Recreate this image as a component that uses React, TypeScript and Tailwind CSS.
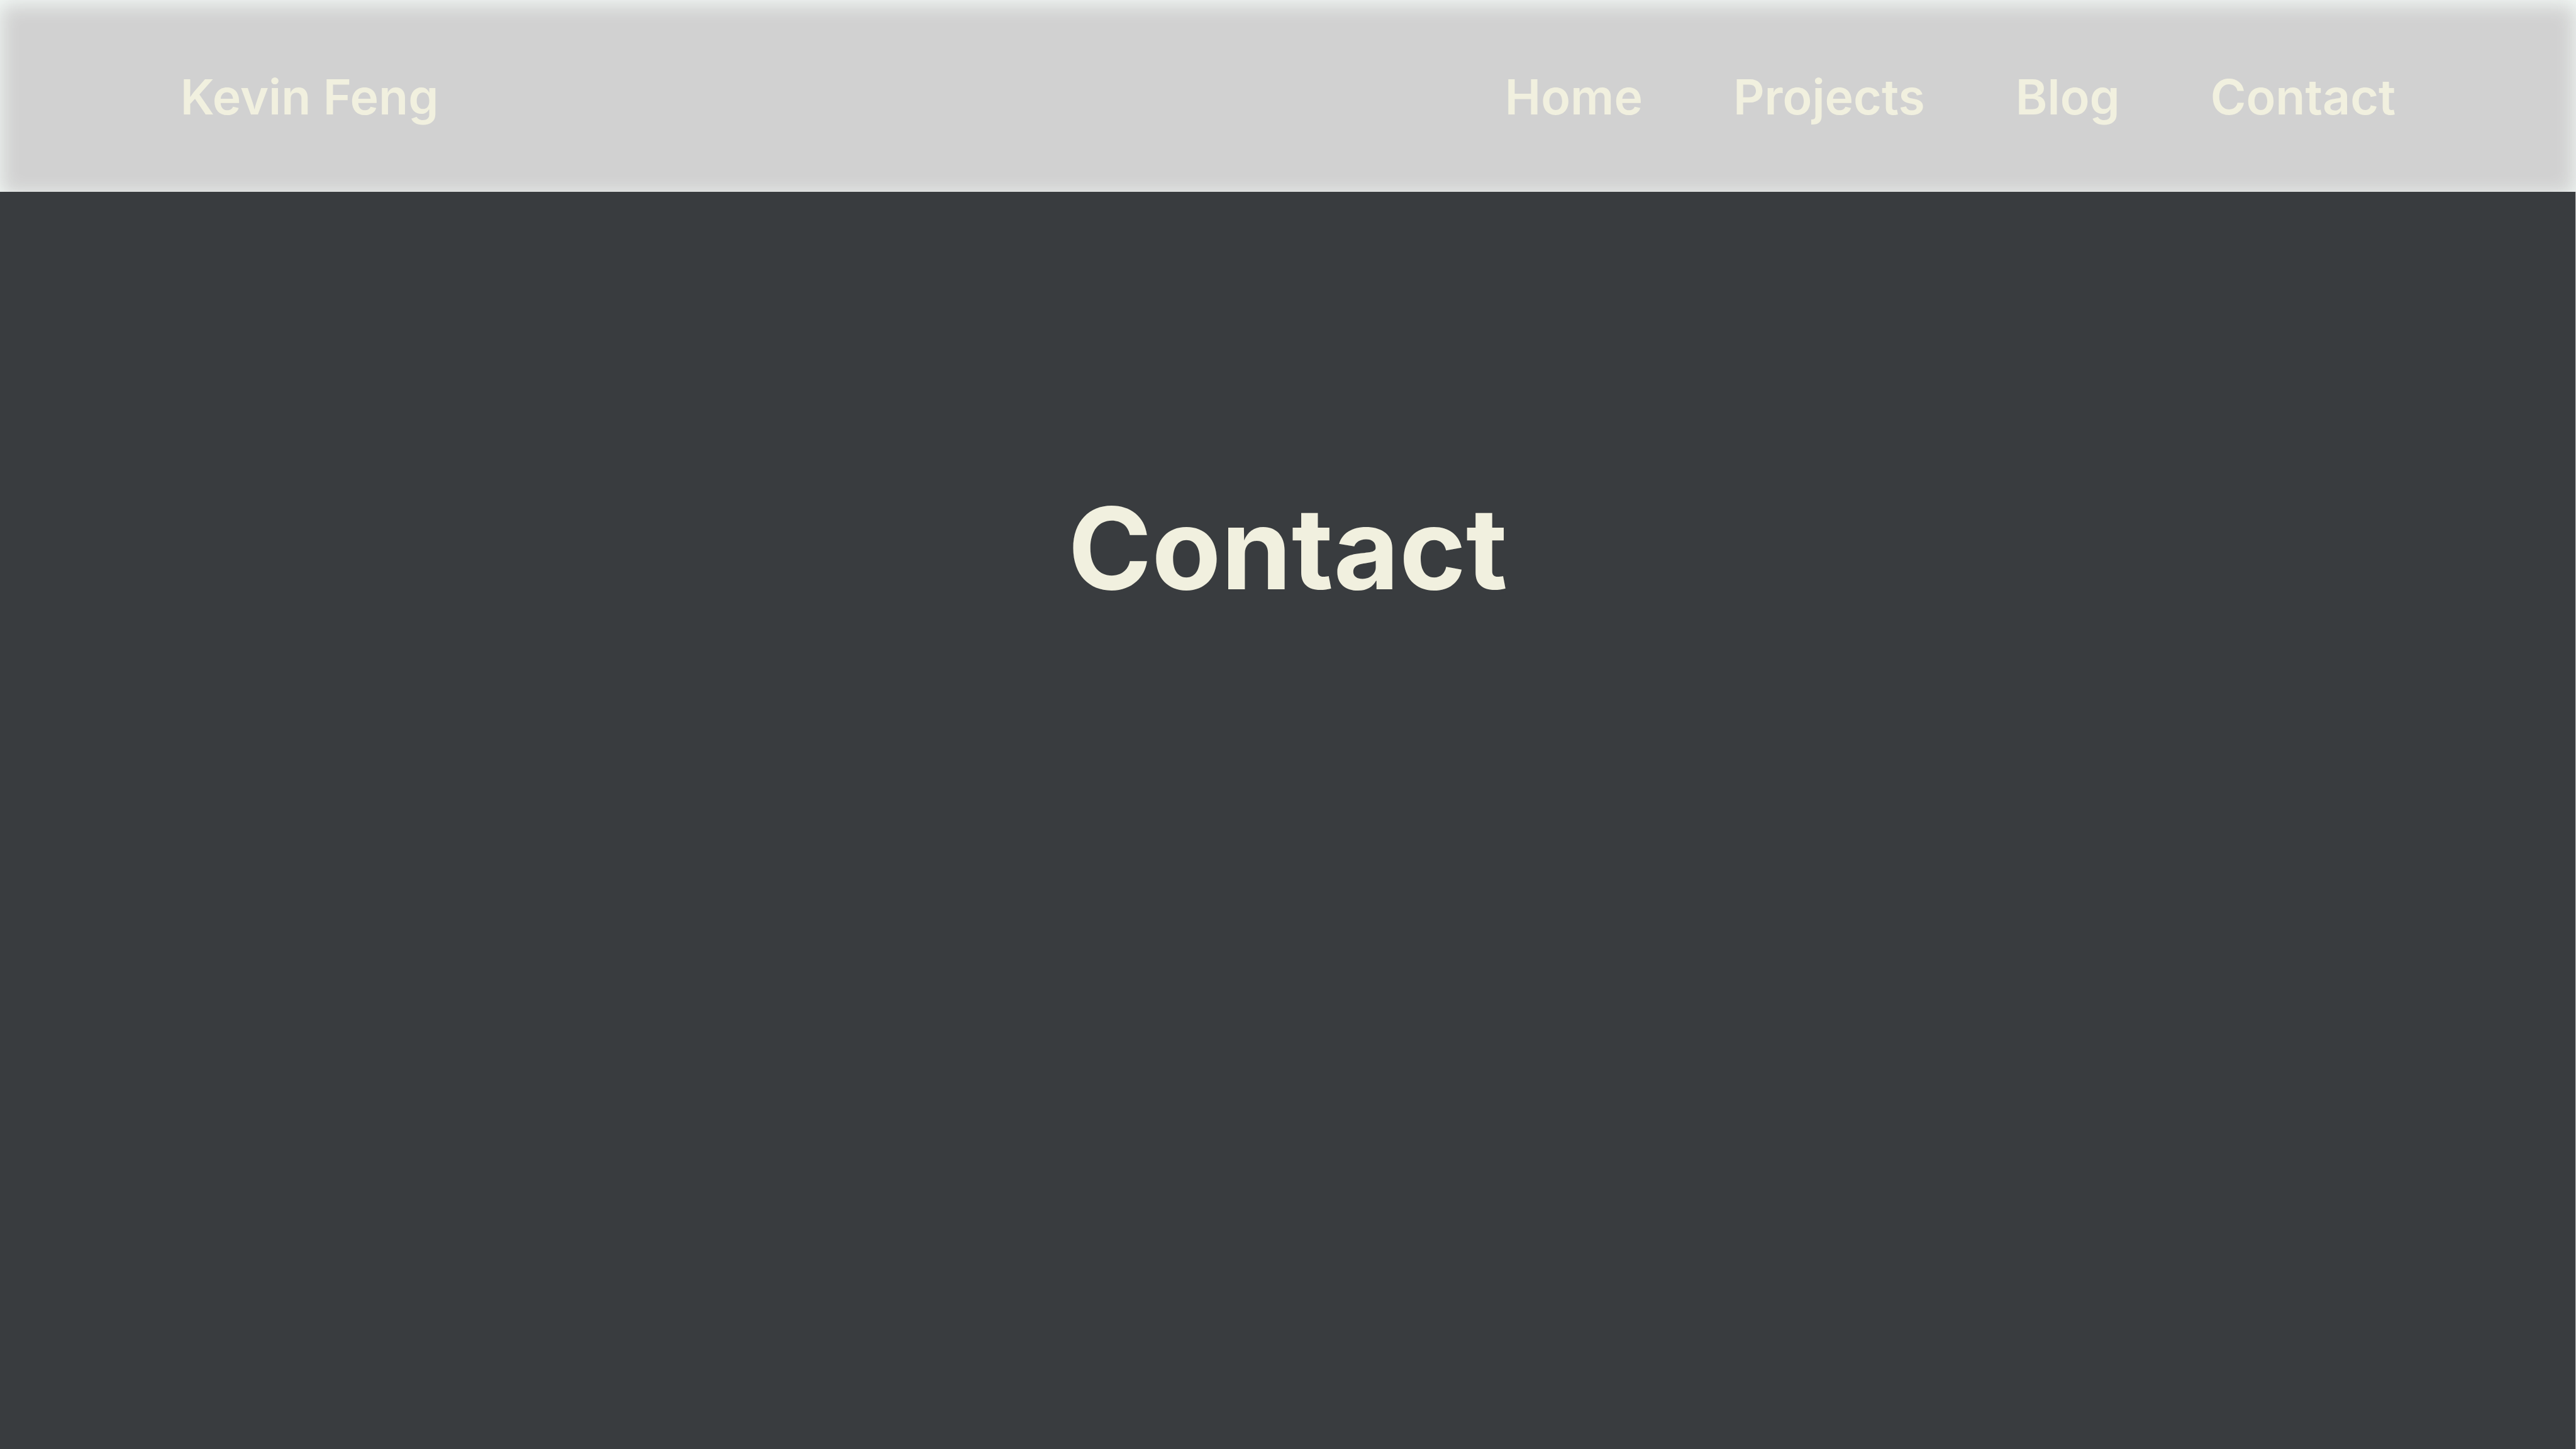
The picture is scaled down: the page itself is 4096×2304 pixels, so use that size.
const links = ["Home", "Projects", "Blog", "Contact"];

export default function App() {
  return (
    <div className="flex min-h-screen flex-col bg-[#393c3f] font-['Inter',sans-serif] text-[#f1f0df]">
      <header className="flex h-[305px] items-center justify-between bg-[#d1d1d1] px-[7%] pt-[2px] text-[77px] leading-[92px] font-semibold shadow-[inset_0_6px_32px_#f5fbf8]">
        <a href="#home">Kevin Feng</a>
        <nav className="flex gap-36">
          {links.map((label) => (
            <a key={label} href={`#${label.toLowerCase()}`}>
              {label}
            </a>
          ))}
        </nav>
      </header>
      <main className="flex-1 border-r border-[#c4c4c4] pt-[459px] text-center">
        <h1 className="text-[180px] leading-[216px] font-bold">Contact</h1>
      </main>
    </div>
  );
}
